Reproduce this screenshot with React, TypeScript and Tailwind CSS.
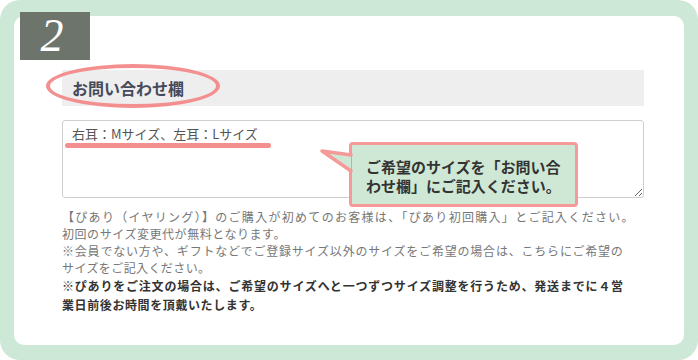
import React from 'react';

const jp = { fontFamily: '"Noto Sans CJK JP", "Noto Sans", sans-serif' };

const Bubble = () => (
  <div className="absolute left-[287px] top-[22px] w-[229px] h-[65px] rounded-[4px] border-[3.5px] border-[#f59a98] bg-[#cfe8d6] pl-[14px] pt-[12px] text-[15px] leading-[19px] font-bold text-[#333] whitespace-nowrap">
    <p>ご希望のサイズを「お問い合</p>
    <p>わせ欄」にご記入ください。</p>
    {/* tail */}
    <svg className="absolute left-[-34px] top-[-4px] overflow-visible" width="40" height="40" viewBox="-30 -4 40 40">
      <path d="M 3 10 L -26 6 L 3 26" fill="#cfe8d6" stroke="#f59a98" strokeWidth="3.5" strokeLinejoin="round" strokeLinecap="round" />
    </svg>
  </div>
);

export default function App() {
  return (
    <div style={jp} className="w-[698px] h-[360px] bg-[#cde8d7] rounded-[20px] pt-[16px] pl-[14px] pr-[14px] pb-[15px]">
      <div className="relative h-full rounded-[10px] bg-white pl-[48px] pr-[40px] pt-[54px] flex flex-col">
        {/* step number */}
        <div className="absolute left-[6px] top-[-4px] w-[70px] h-[48px] bg-[#6d746c] flex items-center justify-center">
          <span className="text-white text-[46px] leading-none italic font-light pl-[2px] pr-[8px]" style={{ fontFamily: '"Liberation Serif", serif' }}>2</span>
        </div>

        {/* heading */}
        <div className="relative h-[36px] bg-[#eeeeee] flex items-center pl-[10px]">
          <span className="text-[16px] font-bold text-[#454a5a]">お問い合わせ欄</span>
          <div className="absolute left-[-16px] top-[-6px] w-[174px] h-[44px] rounded-[50%] border-[4px] border-[#f48f8f]" />
        </div>

        {/* textarea */}
        <div className="relative mt-[14px]">
          <textarea
            defaultValue="右耳：Mサイズ、左耳：Lサイズ"
            className="block w-full h-[78px] border border-[#cfcfcf] rounded-[3px] pl-[9px] pt-[4px] text-[13px] leading-[18px] text-[#555] outline-none"
            style={jp}
          />
          <div className="absolute left-[3px] top-[23px] w-[206px] h-[5px] rounded-full bg-[#f48f8f]" />
          <Bubble />
        </div>

        {/* notes */}
        <div className="mt-[10px] text-[12px] whitespace-nowrap">
          <div className="leading-[17px] text-[#777]">
            <p className="tracking-[1.3px]">【ぴあり（イヤリング）】のご購入が初めてのお客様は、「ぴあり初回購入」とご記入ください。</p>
            <p className="tracking-[0.55px]">初回のサイズ変更代が無料となります。</p>
            <p className="tracking-[0.8px]">※会員でない方や、ギフトなどでご登録サイズ以外のサイズをご希望の場合は、こちらにご希望の</p>
            <p className="tracking-[0.4px]">サイズをご記入ください。</p>
          </div>
          <div className="leading-[19px] font-bold text-[#333]">
            <p className="tracking-[0.8px]">※ぴありをご注文の場合は、ご希望のサイズへと一つずつサイズ調整を行うため、発送までに４営</p>
            <p className="tracking-[0.6px]">業日前後お時間を頂戴いたします。</p>
          </div>
        </div>
      </div>
    </div>
  );
}
